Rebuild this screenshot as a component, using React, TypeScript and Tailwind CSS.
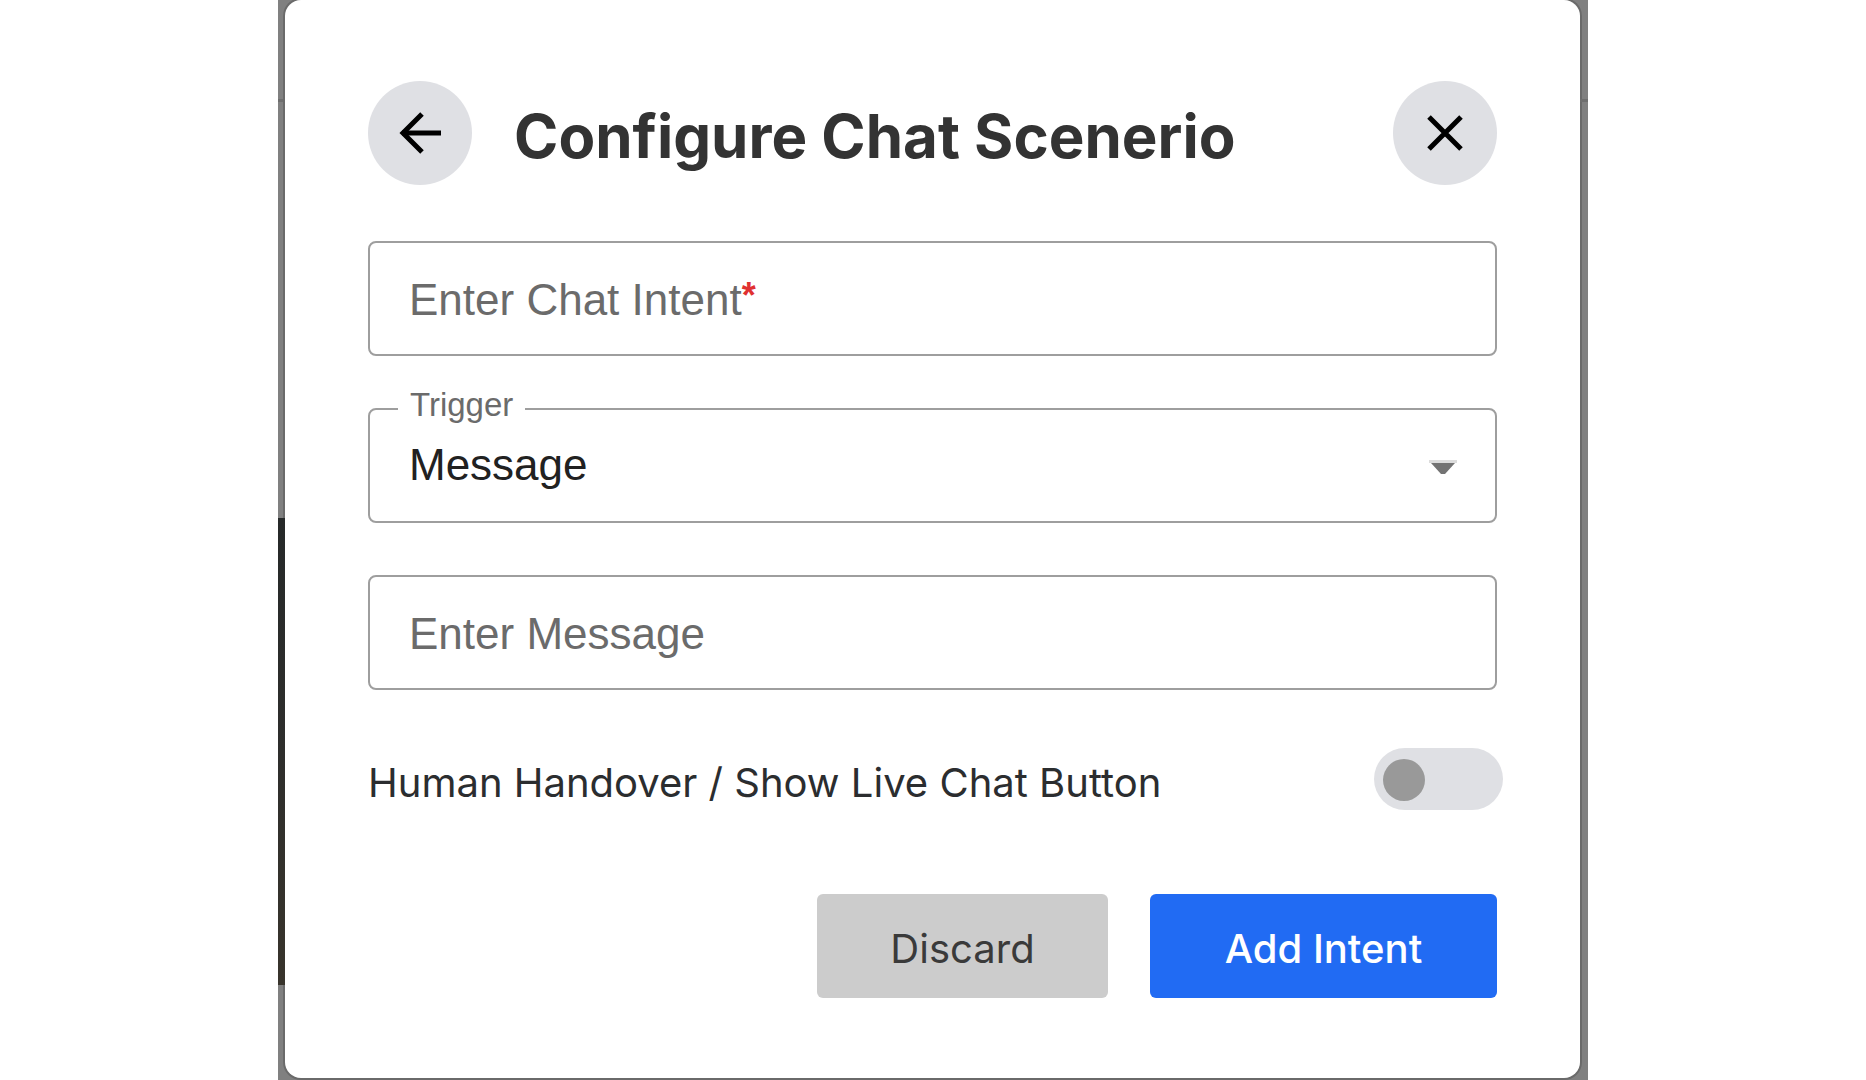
import { useState } from 'react'

const triggers = ['Message', 'Keyword', 'Page visit']

function TextField({ id, label, required }: { id: string; label: string; required?: boolean }) {
  return (
    <div className="relative h-[115px]">
      <input
        id={id}
        type="text"
        placeholder=" "
        required={required}
        className="peer w-full h-full px-10 rounded-lg border-2 border-[#9e9e9e] bg-transparent font-['Liberation_Sans',sans-serif] text-[44px] text-[#212121] outline-none focus:border-[#216bf3]"
      />
      <label
        htmlFor={id}
        className="absolute inset-y-0 left-[41px] hidden items-center pt-0.5 peer-placeholder-shown:flex pointer-events-none font-['Liberation_Sans',sans-serif] text-[44px] text-[#6b6b6b]"
      >
        {label}
        {required && <span className="text-[#e03131] text-[36px] font-bold pb-2">*</span>}
      </label>
    </div>
  )
}

function SelectField({ id, label }: { id: string; label: string }) {
  return (
    <div className="relative h-[115px]">
      <select
        id={id}
        className="appearance-none w-full h-full pl-[39px] pr-20 pb-0.5 rounded-lg border-2 border-[#9e9e9e] bg-transparent font-['Liberation_Sans',sans-serif] text-[44px] text-[#212121] outline-none"
      >
        {triggers.map((t) => (
          <option key={t}>{t}</option>
        ))}
      </select>
      <label
        htmlFor={id}
        className="absolute -top-[21px] left-[30px] px-3 bg-white font-['Liberation_Sans',sans-serif] text-[33px] leading-9 text-[#6b6b6b]"
      >
        {label}
      </label>
      <svg className="absolute right-10 top-[52px] pointer-events-none" width="28" height="14" viewBox="0 0 28 14">
        <path d="M0 0h28v3H0z" fill="#dcdcdc" />
        <path d="M2 3h24L16 14h-4z" fill="#737373" />
      </svg>
    </div>
  )
}

export default function App() {
  const [handover, setHandover] = useState(false)

  return (
    <div className="min-h-screen bg-white font-[Inter,sans-serif]">
      <div className="mx-auto max-w-[1310px] min-h-screen grid grid-cols-[7px_minmax(0,1fr)_8px] pb-0.5 bg-[#808080] overflow-hidden">
        {/* dimmed page edge behind the dialog */}
        <div className="flex flex-col">
          <div className="h-[99px]" />
          <div className="h-[3px] bg-[#6e6e6e]" />
          <div className="grow-[416] basis-0" />
          <div className="relative z-10 grow-[467] basis-0 bg-linear-to-b from-[#262929] via-[#2e2e2c] to-[#38342c]" />
          <div className="grow-[93] basis-0" />
        </div>

        <main
          role="dialog"
          aria-labelledby="dialog-title"
          className="px-[83px] pt-[81px] pb-20 rounded-2xl bg-white shadow-[0_0_0_2px_#6a6a6a]"
        >
          <header className="flex items-center gap-[42px]">
            <button aria-label="Back" className="size-[104px] shrink-0 rounded-full bg-[#dfe0e4] flex items-center justify-center">
              <svg width="44" height="44" viewBox="0 0 44 44" fill="none" stroke="#000" strokeWidth="5">
                <path d="M43 22H4" />
                <path d="M24 3 5 22l19 19" />
              </svg>
            </button>
            <h1 id="dialog-title" className="grow pt-1.5 text-[60px] leading-none font-bold text-[#333333]">
              Configure Chat Scenerio
            </h1>
            <button aria-label="Close" className="size-[104px] shrink-0 rounded-full bg-[#dfe0e4] flex items-center justify-center">
              <svg width="36" height="36" viewBox="0 0 36 36" fill="none" stroke="#000" strokeWidth="5">
                <path d="M2 2l32 32M34 2 2 34" />
              </svg>
            </button>
          </header>

          <form onSubmit={(e) => e.preventDefault()}>
            <div className="mt-14 flex flex-col gap-[52px]">
              <TextField id="intent" label="Enter Chat Intent" required />
              <SelectField id="trigger" label="Trigger" />
              <TextField id="message" label="Enter Message" />
            </div>

            <div className="mt-[58px] -mr-1.5 flex items-center justify-between">
              <label htmlFor="handover" className="pt-2 text-[40px] leading-none text-[#2b2d2f]">
                Human Handover / Show Live Chat Button
              </label>
              <input
                id="handover"
                type="checkbox"
                role="switch"
                checked={handover}
                onChange={(e) => setHandover(e.target.checked)}
                className="appearance-none w-[129px] h-[62px] shrink-0 px-[9px] pt-0.5 rounded-full bg-[#dfe0e4] flex items-center before:size-[42px] before:rounded-full before:bg-[#999999] before:content-[''] checked:justify-end checked:before:bg-[#216bf3]"
              />
            </div>

            <div className="mt-[84px] flex justify-end gap-[42px]">
              <button type="button" className="w-[291px] h-[104px] pt-1.5 rounded-md bg-[#cccccc] text-[40px] text-[#3a3a3a]">
                Discard
              </button>
              <button type="submit" className="w-[347px] h-[104px] pt-1.5 rounded-md bg-[#216bf3] text-[40px] font-medium text-white">
                Add Intent
              </button>
            </div>
          </form>
        </main>

        {/* same edge on the right side */}
        <div>
          <div className="h-[99px]" />
          <div className="h-[3px] bg-[#6e6e6e]" />
        </div>
      </div>
    </div>
  )
}
